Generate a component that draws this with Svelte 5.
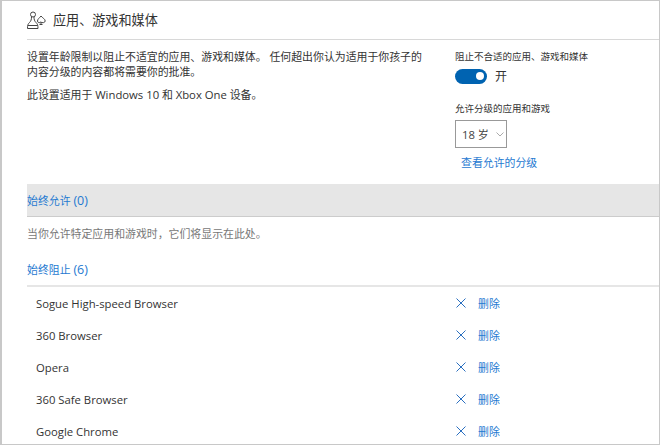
<script>
  const blocked = [
    'Sogue High-speed Browser',
    '360 Browser',
    'Opera',
    '360 Safe Browser',
    'Google Chrome'
  ];

  let enabled = $state(true);
</script>

<main class="page">
  <header class="title">
    <svg class="title-icon" viewBox="0 0 19 18" width="19" height="18" fill="none" stroke="#444" stroke-width="1">
      <circle cx="6" cy="3.5" r="2.5" />
      <path d="M4.5 6 C4.5 8.5 4 10 2.5 11.5 C1 13 0.5 14 0.5 17.5 H11 C11 14 10.5 13 9 11.5 C7.5 10 7 8.5 7 6" />
      <path d="M1 14.5 H10.5" />
      <path d="M14 5 C12.5 7 10.5 8 10.5 10 C10.5 11.8 12.7 12.2 13.8 11 C14.9 12.2 18.2 11.8 18.2 10 C18.2 8 15.5 7 14 5 Z" />
      <path d="M14 11 V13.5 M12.5 13.5 H15.5" />
    </svg>
    <h1>应用、游戏和媒体</h1>
  </header>

  <section class="intro">
    <div class="desc">
      <p>设置年龄限制以阻止不适宜的应用、游戏和媒体。 任何超出你认为适用于你孩子的内容分级的内容都将需要你的批准。</p>
      <p>此设置适用于 <span class="en">Windows 10</span> 和 <span class="en">Xbox One</span> 设备。</p>
    </div>
    <div class="controls">
      <div class="label">阻止不合适的应用、游戏和媒体</div>
      <button type="button" class="switch-row" onclick={() => (enabled = !enabled)}>
        <span class="switch" class:off={!enabled}><span class="knob"></span></span>
        <span>{enabled ? '开' : '关'}</span>
      </button>
      <div class="label rating-label">允许分级的应用和游戏</div>
      <div class="select">
        <span><span class="en">18</span> 岁</span>
        <svg viewBox="0 0 8 5" width="8" height="5" fill="none" stroke="#aaa" stroke-width="1"><path d="M0.5 0.5 L4 4 L7.5 0.5" /></svg>
      </div>
      <a class="rating-link" href="#ratings">查看允许的分级</a>
    </div>
  </section>

  <div class="allow-bar"><a href="#allow">始终允许 <span class="count">(0)</span></a></div>
  <p class="empty">当你允许特定应用和游戏时，它们将显示在此处。</p>

  <div class="block-head"><a href="#block">始终阻止 <span class="count">(6)</span></a></div>
  <ul class="apps">
    {#each blocked as name}
      <li>
        <span class="name en">{name}</span>
        <a class="remove" href="#remove">
          <svg viewBox="0 0 10 10" width="10" height="10" fill="none" stroke="#2a6fc0" stroke-width="1"><path d="M0.5 0.5 L9.5 9.5 M9.5 0.5 L0.5 9.5" /></svg>
          <span>删除</span>
        </a>
      </li>
    {/each}
  </ul>
</main>

<style>
  :global(body) {
    margin: 0;
    background: #fff;
    overflow: hidden;
  }

  .page {
    box-sizing: border-box;
    width: 660px;
    height: 445px;
    padding-left: 25px;
    border: 1px solid #c8c8c8;
    border-left-width: 2px;
    overflow: hidden;
    font-family: "Open Sans", "Noto Sans CJK SC", sans-serif;
    font-size: 10.9px;
    color: #333;
  }

  .en {
    font-size: 11.3px;
  }

  .count {
    font-size: 12.5px;
  }

  .title {
    display: flex;
    align-items: center;
    gap: 7px;
    height: 39px;
    padding-bottom: 1px;
    box-sizing: border-box;
    border-bottom: 1px solid #d8d8d8;
  }

  .title-icon {
    flex: none;
  }

  h1 {
    margin: 0;
    font-size: 13.1px;
    font-weight: 400;
    color: #333;
  }

  .intro {
    display: flex;
    height: 144px;
  }

  .desc {
    width: 428px;
    padding-top: 9px;
    flex: none;
  }

  .desc p {
    margin: 0 0 8px;
    width: 400px;
    line-height: 15px;
  }

  .controls {
    padding-top: 9px;
    font-size: 9.5px;
  }

  .label {
    line-height: 15px;
  }

  .switch-row {
    display: flex;
    align-items: center;
    gap: 8px;
    margin-top: 3px;
    padding: 0;
    border: 0;
    background: none;
    font: inherit;
    font-size: 12px;
    color: #333;
    cursor: pointer;
  }

  .switch {
    display: flex;
    justify-content: flex-end;
    align-items: center;
    width: 32px;
    height: 15px;
    padding: 0 3px;
    box-sizing: border-box;
    border-radius: 8px;
    background: #0063b1;
  }

  .switch.off {
    justify-content: flex-start;
    background: #999;
  }

  .knob {
    width: 8px;
    height: 8px;
    border-radius: 50%;
    background: #fff;
  }

  .rating-label {
    margin-top: 16px;
  }

  .select {
    display: flex;
    align-items: center;
    gap: 7px;
    box-sizing: border-box;
    width: 52px;
    height: 28px;
    margin-top: 4px;
    padding-left: 6px;
    border: 1px solid #999;
    font-size: 11px;
    color: #444;
  }

  .rating-link {
    display: block;
    margin: 7px 0 0 6px;
    font-size: 10.9px;
    line-height: 15px;
  }

  a {
    color: #1f7ad1;
    text-decoration: none;
  }

  .allow-bar {
    display: flex;
    align-items: center;
    height: 32px;
    background: #e6e6e6;
    border-bottom: 1px solid #ccc;
  }

  .empty {
    margin: 0;
    height: 37px;
    line-height: 33px;
    color: #777;
  }

  .block-head {
    display: flex;
    align-items: center;
    height: 31px;
    border-bottom: 2px solid #e6e6e6;
  }

  .apps {
    list-style: none;
    margin: 0;
    padding: 0;
  }

  li {
    display: flex;
    align-items: center;
    height: 32px;
    padding-left: 9px;
  }

  .name {
    width: 420px;
    color: #333;
  }

  .remove {
    display: flex;
    align-items: center;
    gap: 12px;
  }
</style>
